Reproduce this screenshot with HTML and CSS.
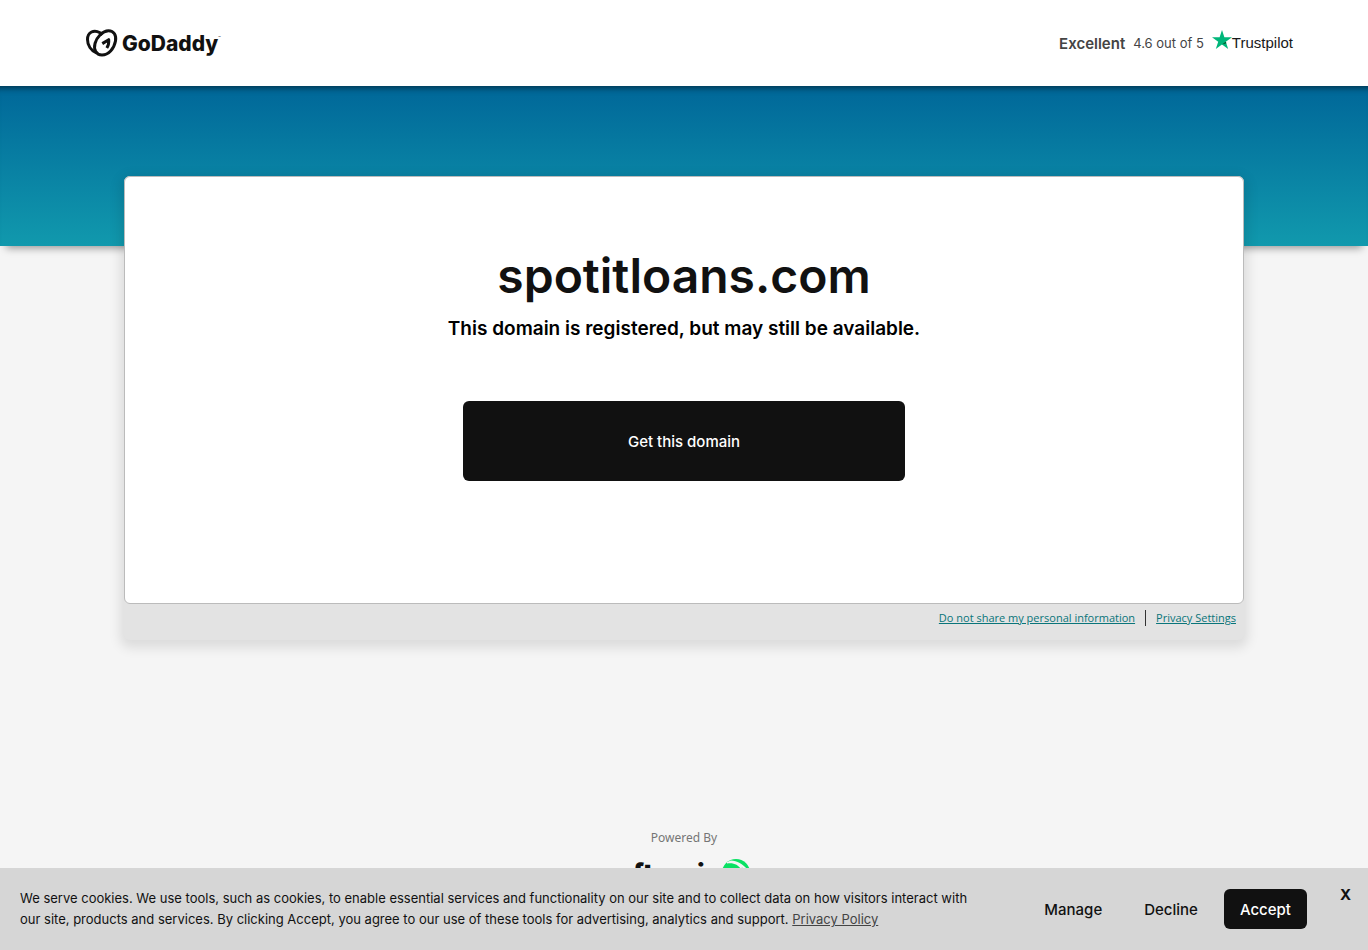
FILE: index.html
```html
<!DOCTYPE html>
<html lang="en">
<head>
    <meta charset="utf-8">
    <meta name="viewport" content="width=device-width, initial-scale=1">
    <title>spotitloans.com</title>
    <link rel="stylesheet" href="styles.css">
</head>
<body>
    <header class="header">
        <a class="logo" href="#">
            <svg class="logo-mark" viewBox="0 0 32 28" aria-hidden="true">
                <g fill="none" stroke="#111" stroke-width="3" stroke-linejoin="round">
                    <path d="M10.500 24C5 21.500 1.500 16 1.500 10.500C1.500 3 8 .2 14 3.800L16.500 5.700"/>
                    <path d="M16 26C10 26 7.500 20.500 9 14.500C10.800 8 16.500 1.800 22.500 1.700C28 1.700 30.500 6.500 29.500 12C28 20 22.500 26 16 26Z"/>
                    <path d="M16.300 14.600L22.700 10.700C23 14 22.500 16.500 20.800 19"/>
                </g>
            </svg>
            <span class="logo-text">GoDaddy</span>
            <span class="logo-tm">™</span>
        </a>
        <div class="rating">
            <strong>Excellent</strong>
            <span>4.6 out of 5</span>
            <a class="trustpilot" href="#">
                <svg viewBox="0 0 20 19" aria-hidden="true">
                    <path fill="#00b67a" d="M10 0L12.400 7.200H20L13.800 11.700L16.200 19L10 14.500L3.800 19L6.200 11.700L0 7.200H7.600Z"/>
                    <path fill="#005128" d="M14.400 13.300L13.800 11.700L10 14.500Z"/>
                </svg>
                <span>Trustpilot</span>
            </a>
        </div>
    </header>

    <div class="banner"></div>

    <main class="panel">
        <div class="card">
            <h1>spotitloans.com</h1>
            <h2>This domain is registered, but may still be available.</h2>
            <button type="button" class="get-domain">Get this domain</button>
        </div>
        <div class="privacy-links">
            <a href="#">Do not share my personal information</a>
            <span class="divider"></span>
            <a href="#">Privacy Settings</a>
        </div>
    </main>

    <footer class="footer">
        <p>Powered By</p>
        <a class="afternic" href="#">
            <span>afternic</span>
            <svg viewBox="0 0 28 28" aria-hidden="true">
                <circle cx="14" cy="14" r="14" fill="#09e163"/>
                <path fill="#f5f5f5" d="M5 3L9 1.500C15 2 21 5 25 10L22 10L20 8.500L19 10C16 6 12 3.500 5 4.500Z"/>
            </svg>
        </a>
    </footer>

    <section class="cookies" aria-label="Cookies">
        <p>We serve cookies. We use tools, such as cookies, to enable essential services and functionality on our site and to collect data on how visitors interact with our site, products and services. By clicking Accept, you agree to our use of these tools for advertising, analytics and support. <a href="#">Privacy Policy</a></p>
        <div class="cookie-buttons">
            <button type="button">Manage</button>
            <button type="button">Decline</button>
            <button type="button" class="accept">Accept</button>
        </div>
        <button type="button" class="close">X</button>
    </section>
</body>
</html>
```
FILE: styles.css
```css
* {
    box-sizing: border-box;
}

body {
    margin: 0;
    min-height: 100vh;
    background-color: #f5f5f5;
    color: #111;
    font-family: Inter, "Liberation Sans", sans-serif;
    font-size: 13px;
}

h1, h2, p {
    margin: 0;
}

button {
    border: none;
    border-radius: 6px;
    background: none;
    color: #111;
    font-family: inherit;
    font-size: 15px;
    font-weight: 500;
    cursor: pointer;
}

/* Header */
.header {
    display: flex;
    justify-content: space-between;
    align-items: center;
    height: 86px;
    padding: 0 75px 0 86px;
    background-color: #fff;
}

.logo {
    display: flex;
    align-items: center;
    color: #111;
    text-decoration: none;
}

.logo-mark {
    width: 32px;
    height: 28px;
    margin-right: 4px;
}

.logo-text {
    font-size: 21px;
    font-weight: 800;
}

.logo-tm {
    align-self: flex-start;
    margin-top: 6px;
    font-size: 4px;
}

.rating {
    display: flex;
    align-items: center;
    gap: 8px;
    color: #444;
}

.rating strong {
    font-size: 15px;
    font-weight: 600;
}

.trustpilot {
    display: flex;
    align-items: center;
    color: #191919;
    font-family: "Liberation Sans", sans-serif;
    font-size: 15px;
    line-height: 18px;
    text-decoration: none;
}

.trustpilot svg {
    width: 20px;
    height: 19px;
    margin-bottom: 8px;
}

/* Gradient strip behind the card */
.banner {
    height: 160px;
    background: linear-gradient(#006799, #1199ad);
    box-shadow: inset 0 8px 6px -6px rgba(0, 0, 0, 0.5), 0 8px 8px -6px rgba(0, 0, 0, 0.4);
}

.panel {
    position: relative;
    max-width: 1120px;
    margin: -70px auto 0;
    border-radius: 6px;
    background-color: #e3e3e3;
    box-shadow: 0 4px 12px 4px rgba(0, 0, 0, 0.1);
}

.card {
    display: flex;
    flex-direction: column;
    align-items: center;
    padding: 68px 20px 122px;
    border: 1px solid #bbb;
    border-radius: 6px;
    background-color: #fff;
    text-align: center;
}

h1 {
    font-size: 48px;
    font-weight: 600;
    line-height: 62px;
}

h2 {
    margin-top: 8px;
    color: #000;
    font-size: 19px;
    font-weight: 600;
    line-height: 28px;
}

.get-domain {
    width: 442px;
    max-width: 100%;
    height: 80px;
    margin-top: 58px;
    background-color: #111;
    color: #fff;
}

.privacy-links {
    display: flex;
    justify-content: flex-end;
    align-items: center;
    gap: 10px;
    padding: 6px 8px 14px;
    font-family: "Open Sans", sans-serif;
    font-size: 11px;
    line-height: 16px;
}

.privacy-links a {
    color: #09757a;
}

.divider {
    width: 1px;
    height: 16px;
    background-color: #333;
}

/* Footer */
.footer {
    margin-top: 188px;
    text-align: center;
}

.footer p {
    color: #757575;
    font-family: "Noto Sans", sans-serif;
    font-size: 12px;
    line-height: 20px;
}

.afternic {
    display: flex;
    justify-content: center;
    align-items: center;
    gap: 2px;
    margin-top: 10px;
    color: #111;
    font-size: 26px;
    font-weight: 900;
    line-height: 30px;
    text-decoration: none;
}

.afternic svg {
    width: 28px;
    height: 28px;
}

/* Cookie bar */
.cookies {
    position: fixed;
    right: 0;
    bottom: 0;
    left: 0;
    display: flex;
    align-items: center;
    justify-content: space-between;
    min-height: 82px;
    padding: 0 12px 0 20px;
    background-color: #d6d6d6;
}

.cookies p {
    flex: 0 1 960px;
    line-height: 21px;
}

.cookies p a {
    color: #444;
}

.cookie-buttons {
    display: flex;
    gap: 10px;
    margin-left: auto;
}

.cookie-buttons button {
    height: 40px;
    padding: 0 16px;
}

.cookie-buttons .accept {
    background-color: #111;
    color: #fff;
}

.close {
    align-self: flex-start;
    margin: 16px 0 0 28px;
    padding: 0 5px;
    font-weight: 700;
    line-height: 22px;
}
```
